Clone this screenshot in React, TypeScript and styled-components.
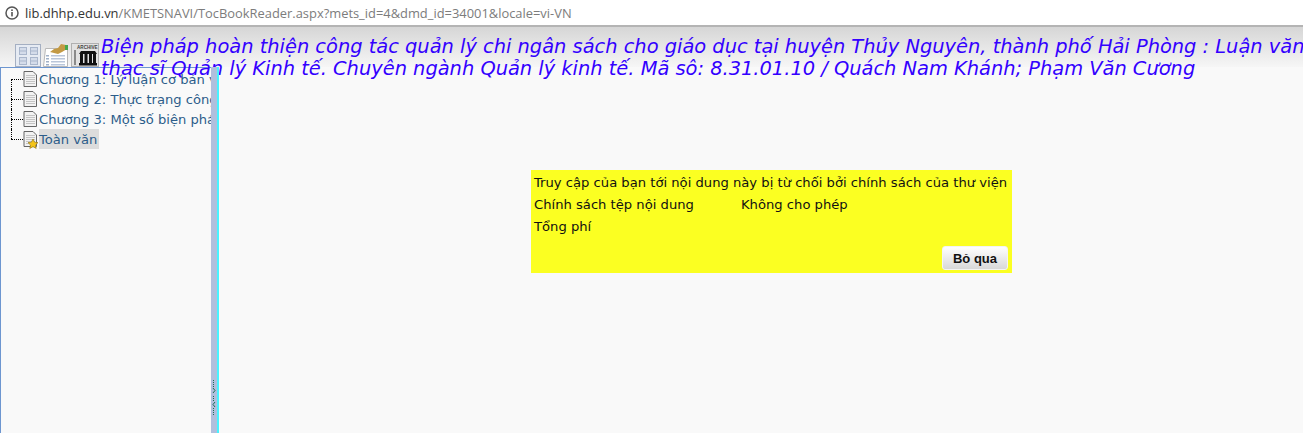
import React from "react";
import styled, { createGlobalStyle } from "styled-components";

const Global = createGlobalStyle`
    html, body { margin: 0; padding: 0; height: 100%; background: #fff; overflow: hidden; }
    #root { height: 100%; }
`;

const Page = styled.div`
    position: relative;
    display: flex;
    flex-direction: column;
    width: 1303px;
    height: 433px;
    overflow: hidden;
`;

const AddressBar = styled.div`
    display: flex;
    align-items: center;
    gap: 5px;
    height: 25px;
    padding-left: 4px;
    background: #fff;
    border-bottom: 2px solid #b4b4b4;
    font: 12.9px "Open Sans", sans-serif;
    color: #7c7c7c;
    flex: none;
`;

const Host = styled.span`
    color: #333;
`;

const Toolbar = styled.div`
    display: flex;
    align-items: flex-end;
    height: 40px;
    padding-left: 15px;
    background: linear-gradient(#d6d6d6, #f6f6f6);
    flex: none;
`;

const Title = styled.div`
    position: absolute;
    left: 101px;
    top: 36px;
    width: 1230px;
    font: italic 19.42px/22px "DejaVu Sans", sans-serif;
    color: #3300ff;
`;

const Body = styled.div`
    display: flex;
    flex: 1;
    min-height: 0;
`;

const TreePanel = styled.div`
    width: 211px;
    flex: none;
    background: #f9f9f9;
    border-left: 1px solid #6d96d0;
    border-top: 1px solid #6d96d0;
    padding: 1px 0 0 10px;
    box-sizing: border-box;
    overflow: hidden;
`;

const TreeRow = styled.div`
    display: flex;
    align-items: center;
    height: 20px;
    white-space: nowrap;
`;

const Branch = styled.span<{ $first?: boolean; $last?: boolean }>`
    position: relative;
    width: 12px;
    height: 20px;
    flex: none;
    &::before {
        content: "";
        position: absolute;
        left: 0;
        top: ${p => (p.$first ? "10px" : "0")};
        bottom: ${p => (p.$last ? "10px" : "0")};
        border-left: 1px dotted #000;
    }
    &::after {
        content: "";
        position: absolute;
        left: 0;
        top: 10px;
        width: 12px;
        border-top: 1px dotted #000;
    }
`;

const TreeLabel = styled.span<{ $active?: boolean }>`
    font: 13.1px/19px "DejaVu Sans", sans-serif;
    padding: 1px ${p => (p.$active ? "2px" : "0")} 0 0;
    color: #2c5d8a;
    background: ${p => (p.$active ? "#dcdcdc" : "transparent")};
`;

const Splitter = styled.div`
    position: relative;
    width: 6px;
    flex: none;
    background: #b0bfdd;
    border-right: 2px solid #48f2ff;
`;

const Grip = styled.svg`
    position: absolute;
    left: 1px;
    top: 313px;
`;

const Content = styled.div`
    flex: 1;
    background: #f9f9f9;
    padding: 103px 0 0 312px;
`;

const Notice = styled.div`
    width: 481px;
    height: 103px;
    box-sizing: border-box;
    padding: 2px 4px 0 3px;
    background: #fbff22;
    font: 13.15px/22px "DejaVu Sans", sans-serif;
    color: #111;
    display: flex;
    flex-direction: column;
`;

const NoticeRow = styled.div`
    display: flex;
    white-space: nowrap;
`;

const NoticeKey = styled.span`
    width: 207px;
`;

const Actions = styled.div`
    display: flex;
    justify-content: flex-end;
    margin-top: 8px;
`;

const Button = styled.button`
    width: 66px;
    height: 24px;
    padding: 0;
    border: 1px solid #f4f4f4;
    border-radius: 3px;
    background: linear-gradient(#fff, #d8d8d8);
    font: bold 13px "Liberation Sans", sans-serif;
    color: #111;
`;

const InfoIcon = () => (
    <svg width="16" height="16" viewBox="0 0 16 16">
        <circle cx="8" cy="8" r="6" fill="none" stroke="#555" strokeWidth="1.5" />
        <rect x="7.2" y="7" width="1.6" height="4.4" fill="#555" />
        <rect x="7.2" y="4.4" width="1.6" height="1.6" fill="#555" />
    </svg>
);

const ToolIcon = styled.svg<{ $left: number }>`
    flex: none;
    display: block;
    margin-left: ${p => p.$left}px;
`;

const GridIcon = () => (
    <ToolIcon $left={0} width="26" height="23" viewBox="0 0 26 23">
        <rect x="0.5" y="0.5" width="25" height="22" fill="#e6ebf3" stroke="#a4afc2" />
        {[[4, 3], [15, 3], [4, 13], [15, 13]].map(([x, y]) => (
            <g key={`${x}-${y}`}>
                <rect x={x + 0.5} y={y + 0.5} width="7" height="7" fill="#d4dcea" stroke="#a9b6cc" />
                <line x1={x} x2={x + 8} y1={y + 4} y2={y + 4} stroke="#a9b6cc" />
            </g>
        ))}
    </ToolIcon>
);

const ListIcon = () => (
    <ToolIcon $left={2} width="25" height="23" viewBox="0 0 25 23">
        <path d="M2.5 4.5 H24.5 V22.5 H0.5 Z" fill="#fff" stroke="#b8b8b8" />
        <path d="M7 8 L11 5 L15 4 L18 0 L23 1 L24 5 L19 8 L15 10 L11 9 Z" fill="#c39a45" />
        <rect x="22" y="1" width="3" height="5" fill="#46a84c" />
        {[11, 14, 17, 20].map(y => (
            <g key={y}>
                <rect x="3" y={y} width="3" height="1.5" fill="#9fb0c8" />
                <rect x="8" y={y} width="14" height="1.5" fill="#b9c6da" />
            </g>
        ))}
    </ToolIcon>
);

const ArchiveIcon = () => (
    <ToolIcon $left={3} width="28" height="24" viewBox="0 0 28 24">
        <rect x="0.5" y="0.5" width="27" height="23" fill="#e2e2e2" stroke="#b0b0b0" />
        <text x="6" y="5.5" fontFamily="Liberation Sans" fontSize="4.6" fontWeight="bold" fill="#444">
            ARCHIVE
        </text>
        <rect x="3" y="7" width="2" height="15" fill="#8a8a8a" />
        <path d="M8 11 L10 8 H24 L26 11 Z" fill="#111" />
        {[10, 14.5, 19, 23].map(x => (
            <rect key={x} x={x - 1} y="11" width="3" height="9" fill="#111" />
        ))}
        <rect x="8" y="20" width="18" height="2.5" fill="#111" />
    </ToolIcon>
);

const DocIcon = styled.svg`
    flex: none;
    display: block;
    margin-right: 2px;
    overflow: visible;
`;

const PageIcon = ({ star }: { star?: boolean }) => (
    <DocIcon width="14" height="16" viewBox="0 0 14 16">
        <path d="M1 .5 H10 L13.5 4 V15.5 H1 Z" fill="#f2f2f2" stroke="#666" />
        {[4, 6, 8, 10, 12].map(y => (
            <line key={y} x1="3" x2="12" y1={y + 0.5} y2={y + 0.5} stroke="#c4c4c4" />
        ))}
        {star && (
            <path
                d="M10 8 L11.6 11.2 L15 11.6 L12.5 14 L13.2 17.4 L10 15.7 L6.8 17.4 L7.5 14 L5 11.6 L8.4 11.2 Z"
                fill="#f5c518"
                stroke="#8a6d10"
                strokeWidth="0.6"
            />
        )}
    </DocIcon>
);

const chapters = [
    "Chương 1: Lý luận cơ bản về quản lý",
    "Chương 2: Thực trạng công tác quản lý",
    "Chương 3: Một số biện pháp hoàn thiện",
];

const gripDots = [0, 2, 4, 6, 16, 18, 20, 28, 30, 32, 34];

export default function App() {
    return (
        <Page>
            <Global />
            <AddressBar>
                <InfoIcon />
                <span>
                    <Host>lib.dhhp.edu.vn</Host>/KMETSNAVI/TocBookReader.aspx?mets_id=4&amp;dmd_id=34001&amp;locale=vi-VN
                </span>
            </AddressBar>
            <Toolbar>
                <GridIcon />
                <ListIcon />
                <ArchiveIcon />
            </Toolbar>
            <Title>
                Biện pháp hoàn thiện công tác quản lý chi ngân sách cho giáo dục tại huyện Thủy Nguyên, thành phố Hải Phòng : Luận văn thạc sĩ Quản lý Kinh tế. Chuyên ngành Quản lý kinh tế. Mã sô: 8.31.01.10 / Quách Nam Khánh; Phạm Văn Cương
            </Title>
            <Body>
                <TreePanel>
                    {chapters.map((c, i) => (
                        <TreeRow key={c}>
                            <Branch $first={i === 0} />
                            <PageIcon />
                            <TreeLabel>{c}</TreeLabel>
                        </TreeRow>
                    ))}
                    <TreeRow>
                        <Branch $last />
                        <PageIcon star />
                        <TreeLabel $active>Toàn văn</TreeLabel>
                    </TreeRow>
                </TreePanel>
                <Splitter>
                    <Grip width="4" height="36" viewBox="0 0 4 36">
                        {gripDots.map(y => (
                            <rect key={y} x="1" y={y} width="1" height="1" fill="#1f6a55" />
                        ))}
                        <path d="M1 8l2 2.5-2 2.5M3 22l-2 2.5 2 2.5" fill="none" stroke="#1f6a55" />
                    </Grip>
                </Splitter>
                <Content>
                    <Notice>
                        <NoticeRow>Truy cập của bạn tới nội dung này bị từ chối bởi chính sách của thư viện</NoticeRow>
                        <NoticeRow>
                            <NoticeKey>Chính sách tệp nội dung</NoticeKey>
                            <span>Không cho phép</span>
                        </NoticeRow>
                        <NoticeRow>Tổng phí</NoticeRow>
                        <Actions>
                            <Button>Bỏ qua</Button>
                        </Actions>
                    </Notice>
                </Content>
            </Body>
        </Page>
    );
}
